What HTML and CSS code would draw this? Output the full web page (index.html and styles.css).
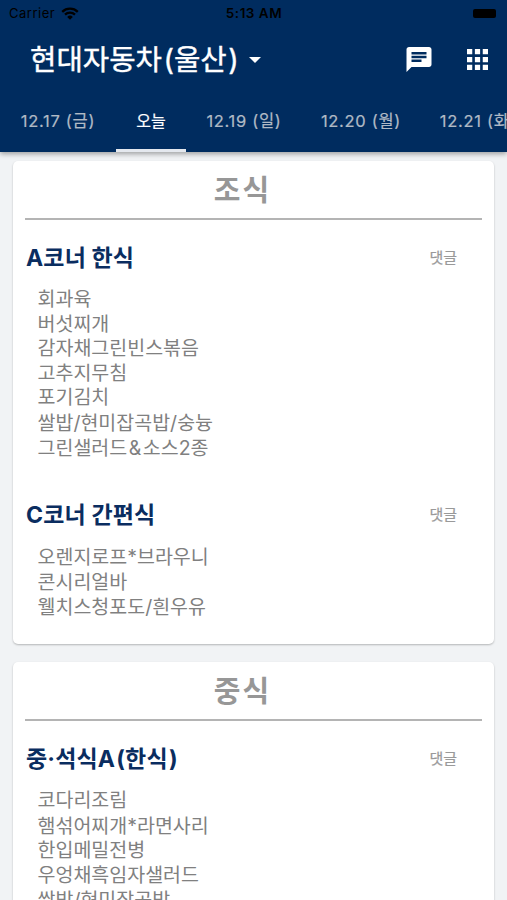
FILE: index.html
```html
<!DOCTYPE html>
<html lang="ko">
<head>
<meta charset="utf-8">
<meta name="viewport" content="width=device-width, initial-scale=1">
<title>현대자동차(울산)</title>
<link rel="stylesheet" href="styles.css">
</head>
<body>
<header class="header">
  <div class="status">
    <div class="carrier"><span>Carrier</span>
      <svg class="wifi" viewBox="0 0 18 13"><path d="M1.2 4.8a11.2 11.2 0 0 1 15.6 0M4 7.7a7.2 7.2 0 0 1 10 0" fill="none" stroke="#000" stroke-width="2.3"/><path d="M9 12.7 6.2 9.9a4 4 0 0 1 5.6 0z"/></svg>
    </div>
    <div class="time">5:13 AM</div>
    <div class="power"><span class="battery"></span></div>
  </div>
  <div class="toolbar">
    <h1 class="title">현대자동차<span class="paren">(</span>울산<span class="paren">)</span></h1>
    <svg class="caret" viewBox="0 0 12 6"><path d="M0 0h12L6 6z"/></svg>
    <svg class="chat" viewBox="2 2 20 20"><path d="M20 2H4c-1.1 0-1.99.9-1.99 2L2 22l4-4h14c1.1 0 2-.9 2-2V4c0-1.1-.9-2-2-2zM6 9h12v2H6V9zm8 5H6v-2h8v2zm4-6H6V6h12v2z"/></svg>
    <svg class="apps" viewBox="4 4 16 16"><path d="M4 8h4V4H4v4zm6 12h4v-4h-4v4zm-6 0h4v-4H4v4zm0-6h4v-4H4v4zm6 0h4v-4h-4v4zm6-10v4h4V4h-4zm-6 4h4V4h-4v4zm6 6h4v-4h-4v4zm0 6h4v-4h-4v4z"/></svg>
  </div>
  <nav class="tabs">
    <a class="tab">12.17 (금)</a>
    <a class="tab tab-active">오늘</a>
    <a class="tab">12.19 (일)</a>
    <a class="tab tab-wide">12.20 (월)</a>
    <a class="tab">12.21 (화)</a>
  </nav>
</header>
<main class="content">
  <section class="card">
    <h2 class="meal">조식</h2>
    <article class="corner">
      <div class="corner-head"><h3 class="corner-name">A코너 한식</h3><a class="comment">댓글</a></div>
      <ul class="menu">
        <li>회과육</li><li>버섯찌개</li><li>감자채그린빈스볶음</li><li>고추지무침</li><li>포기김치</li><li class="mixed">쌀밥/현미잡곡밥/숭늉</li><li class="mixed">그린샐러드<span class="amp">&amp;</span>소스2종</li>
      </ul>
    </article>
    <article class="corner">
      <div class="corner-head"><h3 class="corner-name">C코너 간편식</h3><a class="comment">댓글</a></div>
      <ul class="menu">
        <li class="mixed">오렌지로프*브라우니</li><li>콘시리얼바</li><li class="mixed">웰치스청포도/흰우유</li>
      </ul>
    </article>
  </section>
  <section class="card">
    <h2 class="meal">중식</h2>
    <article class="corner">
      <div class="corner-head"><h3 class="corner-name">중·석식A<span class="paren">(</span>한식<span class="paren">)</span></h3><a class="comment">댓글</a></div>
      <ul class="menu">
        <li>코다리조림</li><li class="mixed">햄섞어찌개*라면사리</li><li>한입메밀전병</li><li>우엉채흑임자샐러드</li><li class="mixed">쌀밥/현미잡곡밥</li>
      </ul>
    </article>
  </section>
</main>
</body>
</html>
```
FILE: styles.css
```css
* {
  box-sizing: border-box;
  margin: 0;
  padding: 0;
}

body {
  height: 900px;
  overflow: hidden;
  background: #f1f3f5;
  font-family: Inter, "Noto Sans CJK KR", sans-serif;
  display: flex;
  flex-direction: column;
}

.header {
  position: relative;
  flex: none;
  height: 152px;
  background: #002c5f;
  box-shadow: 0 2px 5px rgba(0, 0, 0, 0.35);
}

.status {
  height: 27px;
  padding: 0 11px 0 9px;
  display: grid;
  grid-template-columns: 1fr auto 1fr;
  align-items: center;
  font-size: 13px;
  line-height: 27px;
  color: #000;
}

.carrier {
  display: flex;
  align-items: center;
  gap: 6px;
  letter-spacing: 0.5px;
}

.wifi {
  width: 18px;
  height: 13px;
}

.time {
  padding-left: 3px;
  font-size: 13.5px;
  font-weight: 600;
  letter-spacing: 0.5px;
}

.power {
  display: flex;
  justify-content: flex-end;
}

.battery {
  width: 23px;
  height: 9px;
  border-radius: 2px;
  background: #000;
}

.toolbar {
  height: 65px;
  padding: 0 19px 0 30px;
  display: flex;
  align-items: center;
}

.title {
  font-size: 28.7px;
  font-weight: 400;
  line-height: 64px;
  color: #fff;
  white-space: nowrap;
  -webkit-text-stroke: 0.4px #fff;
}

.title .paren {
  padding-left: 1.5px;
}

.caret {
  width: 12px;
  height: 6px;
  margin-left: 10px;
  fill: #fff;
}

.chat {
  width: 26px;
  height: 25px;
  margin-left: auto;
  fill: #fff;
}

.apps {
  width: 21px;
  height: 21px;
  margin-left: 35px;
  fill: #fff;
}

.tabs {
  height: 60px;
  display: flex;
  overflow: hidden;
}

.tab {
  flex: none;
  width: 116px;
  height: 60px;
  border-bottom: 3px solid transparent;
  text-align: center;
  font-size: 16.5px;
  line-height: 59px;
  letter-spacing: 0.7px;
  color: #b0bac5;
  white-space: nowrap;
  -webkit-text-stroke: 0.2px currentColor;
}

.tab-wide {
  width: 118px;
}

.tab-active {
  width: 70px;
  border-bottom-color: #e4e8ee;
  font-size: 16px;
  letter-spacing: 0;
  color: #fff;
}

.content {
  flex: none;
  padding: 9px 13px 0;
  display: flex;
  flex-direction: column;
  gap: 18px;
}

.card {
  height: 483px;
  padding: 0 12px;
  border-radius: 5px;
  background: #fff;
  box-shadow: 0 1px 2px rgba(0, 0, 0, 0.25);
}

.meal {
  height: 59px;
  padding-right: 22px;
  border-bottom: 2px solid #b4b4b4;
  text-align: center;
  font-size: 29px;
  font-weight: 700;
  line-height: 59px;
  letter-spacing: 2px;
  color: #979797;
}

.corner {
  height: 257px;
  padding-top: 19px;
}

.corner-head {
  height: 38px;
  padding: 0 25px 0 1px;
  display: flex;
  align-items: center;
  justify-content: space-between;
}

.corner-name {
  font-size: 23px;
  font-weight: 700;
  line-height: 39px;
  letter-spacing: 0.15px;
  color: #0a2d60;
}

.corner-name .paren {
  padding-left: 1.2px;
}

.comment {
  font-size: 15px;
  line-height: 38px;
  color: #999;
  -webkit-text-stroke: 0.2px #999;
}

.menu {
  padding: 10px 0 0 12.5px;
  list-style: none;
}

.menu li {
  height: 24.6px;
  font-size: 19.5px;
  line-height: 25px;
  color: #808080;
  white-space: nowrap;
}

.menu .mixed {
  height: 25.5px;
  line-height: 26px;
}

.amp {
  padding: 0 1.5px;
}
```
